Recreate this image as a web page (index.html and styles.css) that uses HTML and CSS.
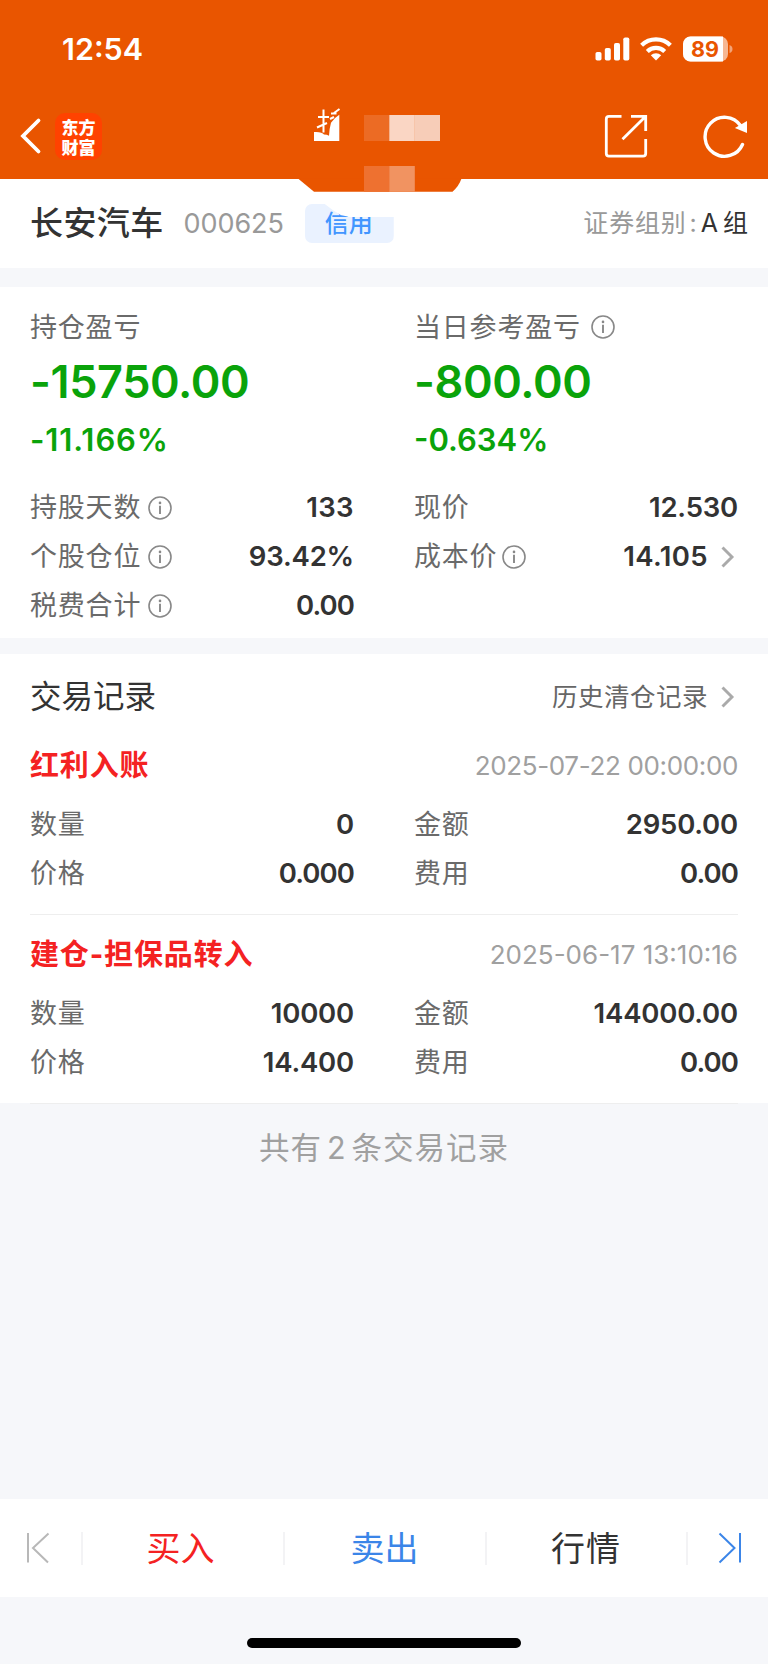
FILE: index.html
```html
<!DOCTYPE html>
<html lang="zh-CN">
<head>
<meta charset="utf-8">
<title>长安汽车 000625</title>
<link rel="stylesheet" href="styles.css">
</head>
<body>
<svg class="defs" width="0" height="0">
  <symbol id="info" viewBox="0 0 24 24"><circle cx="12" cy="12" r="11" fill="none" stroke="currentColor" stroke-width="1.6"/><circle cx="12" cy="6.9" r="1.3" fill="currentColor"/><path d="M12 9.800v8.200" stroke="currentColor" stroke-width="1.9"/></symbol>
  <symbol id="chevron" viewBox="0 0 14 22"><path d="M1.500 1.500 11 11l-9.500 9.500" fill="none" stroke="currentColor" stroke-width="2.900"/></symbol>
</svg>
<div class="screen">
  <header class="header">
    <div class="status">
      <span class="clock">12:54</span>
      <svg class="status-icons" width="140" height="28" viewBox="0 0 140 28">
        <g fill="#fff">
          <rect x="0.500" y="17" width="6" height="8.500" rx="1.800"/>
          <rect x="9.800" y="13" width="6" height="12.500" rx="1.800"/>
          <rect x="19" y="8" width="6" height="17.500" rx="1.800"/>
          <rect x="28.300" y="2.500" width="6" height="23" rx="1.800"/>
          <path d="M61 25.500 55.800 20.300a7.400 7.400 0 0 1 10.400 0Z"/>
        </g>
        <g fill="none" stroke="#fff" stroke-width="4.200">
          <path d="M52.300 16.400a12.500 12.500 0 0 1 17.400 0"/>
          <path d="M46.600 10.300a20.700 20.700 0 0 1 28.800 0"/>
        </g>
        <rect x="88" y="1.500" width="45" height="25" rx="7.500" fill="#f6b793"/>
        <path d="M95.500 1.500H128v25H95.500a7.500 7.500 0 0 1-7.500-7.500V9a7.500 7.500 0 0 1 7.500-7.500Z" fill="#fff"/>
        <path d="M134.500 10q3 1 3 4t-3 4Z" fill="#f3a377"/>
        <text class="battery-level" x="110" y="21.800" text-anchor="middle">89</text>
      </svg>
    </div>
    <div class="nav">
      <svg class="back" width="22" height="38" viewBox="0 0 22 38"><path d="M18.500 3.500 3 19l15.500 15.500" fill="none" stroke="#fff" stroke-width="3.800" stroke-linecap="round"/></svg>
      <div class="brand"><span>东方</span><span>财富</span></div>
      <svg class="share" width="44" height="44" viewBox="0 0 44 44" fill="none" stroke="#fff" stroke-width="2.800">
        <path d="M17.500 2.300H5Q2.300 2.300 2.300 5v34.500q0 2.700 2.700 2.700h34q2.700 0 2.700-2.700V25"/>
        <path d="M27 2.300h14.700V17M41 3 18.500 25.300"/>
      </svg>
      <svg class="refresh" width="46" height="46" viewBox="0 0 46 46"><path d="M40.500 31.500A19.500 19.500 0 1 1 38.500 12.500" fill="none" stroke="#fff" stroke-width="3.400" stroke-linecap="round"/><path d="M45 8v12L32.900 15Z" fill="#fff"/></svg>
    </div>
    <svg class="mask" width="164" height="90" viewBox="298 104 164 90">
      <path d="M298 178.500H461.500Q459 186 452.500 191.700H314Z" fill="#e95500"/>
      <path d="M314 132q8-.5 10 2.500 3 0 5 1.200.3-7 2-13Q334 118 339.300 114.700V141H314Z" fill="#fff"/>
      <path d="M323.500 109.500v23M318 117h11M317 127.500l10-4.500M331 113.500h5.500M334 113l5.500-4M330 119l4-2" fill="none" stroke="#fff" stroke-width="2"/>
      <rect x="364" y="115" width="25.500" height="26" fill="#ec6b24"/>
      <rect x="389.300" y="115" width="25.500" height="26" fill="#fad6c4"/>
      <rect x="414.500" y="115" width="25.500" height="26" fill="#f7cdb8"/>
      <rect x="364" y="166" width="25.500" height="25.700" fill="#ee7130"/>
      <rect x="389.300" y="166" width="25.500" height="25.700" fill="#f19361"/>
    </svg>
  </header>

  <section class="stock">
    <h1 class="name">长安汽车</h1>
    <span class="code">000625</span>
    <span class="tag">信用</span>
    <span class="group"><span class="group-label">证券组别</span><span class="colon">:</span><span class="letter">A</span><span>组</span></span>
  </section>

  <section class="summary">
    <div class="col">
      <div class="label head">持仓盈亏</div>
      <div class="big">-15750.00</div>
      <div class="pct loose">-11.166%</div>
      <div class="row"><span class="label">持股天数</span><svg class="info"><use href="#info"/></svg><b class="num loose">133</b></div>
      <div class="row"><span class="label">个股仓位</span><svg class="info"><use href="#info"/></svg><b class="num">93.42%</b></div>
      <div class="row"><span class="label">税费合计</span><svg class="info"><use href="#info"/></svg><b class="num tight">0.00</b></div>
    </div>
    <div class="col">
      <div class="label head">当日参考盈亏<svg class="info wide"><use href="#info"/></svg></div>
      <div class="big">-800.00</div>
      <div class="pct">-0.634%</div>
      <div class="row"><span class="label">现价</span><b class="num">12.530</b></div>
      <div class="row"><span class="label">成本价</span><svg class="info near"><use href="#info"/></svg><b class="num loose">14.105</b><svg class="chevron"><use href="#chevron"/></svg></div>
    </div>
  </section>

  <section class="records">
    <div class="records-head"><h2 class="records-title">交易记录</h2><span class="history">历史清仓记录</span><svg class="chevron"><use href="#chevron"/></svg></div>
    <article class="record">
      <div class="record-head"><h3 class="kind">红利入账</h3><time class="date tight-date">2025-07-22 00:00:00</time></div>
      <div class="pairs">
        <div class="row"><span class="label">数量</span><b class="num">0</b></div>
        <div class="row"><span class="label">金额</span><b class="num">2950.00</b></div>
        <div class="row"><span class="label">价格</span><b class="num tight">0.000</b></div>
        <div class="row"><span class="label">费用</span><b class="num tight">0.00</b></div>
      </div>
    </article>
    <article class="record">
      <div class="record-head"><h3 class="kind">建仓-担保品转入</h3><time class="date">2025-06-17 13:10:16</time></div>
      <div class="pairs">
        <div class="row"><span class="label">数量</span><b class="num">10000</b></div>
        <div class="row"><span class="label">金额</span><b class="num">144000.00</b></div>
        <div class="row"><span class="label">价格</span><b class="num">14.400</b></div>
        <div class="row"><span class="label">费用</span><b class="num tight">0.00</b></div>
      </div>
    </article>
  </section>

  <p class="total">共有<span class="count">2</span>条交易记录</p>

  <nav class="actions">
    <span class="step to-first"><svg width="24" height="32" viewBox="0 0 24 32"><path d="M2 1v29.500M22.500 1.500 7 16l15 14.500" fill="none" stroke="#b8b8b8" stroke-width="2"/></svg></span>
    <span class="action buy">买入</span>
    <span class="action sell">卖出</span>
    <span class="action quote">行情</span>
    <span class="step to-last"><svg width="24" height="32" viewBox="0 0 24 32"><path d="M22 1v29.500M1.500 1.500 16.500 16l-15 14.500" fill="none" stroke="#3b85e8" stroke-width="2"/></svg></span>
  </nav>
  <footer class="home"><div class="indicator"></div></footer>
</div>
</body>
</html>
```
FILE: styles.css
```css
* { box-sizing: border-box; }
body { margin: 0; }
.defs { display: block; }
.screen {
  width: 768px;
  height: 1664px;
  display: flex;
  flex-direction: column;
  overflow: hidden;
  background: #f6f7fa;
  color: #333;
  font-family: Inter, "Noto Sans CJK SC", sans-serif;
  font-size: 27px;
  line-height: 1;
}
h1, h2, h3, p { margin: 0; font-weight: 400; }
svg { flex: none; display: block; }

.header { position: relative; height: 179px; flex: none; background: #e95500; color: #fff; }
.status { display: flex; justify-content: space-between; align-items: center; height: 98px; padding: 0 33px 0 62px; }
.clock { font-size: 30.500px; font-weight: 600; letter-spacing: 0; }
.battery-level { font-size: 21.500px; font-weight: 700; fill: #e95500; }
.nav { display: flex; align-items: center; height: 76px; padding: 0 20px 0 20px; }
.brand {
  display: flex; flex-direction: column; justify-content: center; gap: 3px;
  width: 47px; height: 47px; margin-left: 13px; border-radius: 10px;
  background: #ff4200; font-family: "Noto Sans CJK SC", sans-serif;
  font-size: 17px; font-weight: 900; line-height: 17px; text-align: center;
}
.share { margin-left: auto; }
.refresh { margin-left: 54px; }
.mask { position: absolute; left: 298px; top: 104px; }

.stock { display: flex; align-items: center; height: 89px; flex: none; padding: 0 20px 0 30px; background: #fff; }
.name { font-size: 33px; font-weight: 500; letter-spacing: .4px; }
.code { margin-left: 20px; color: #999; letter-spacing: -.1px; }
.tag {
  width: 89px; height: 39px; margin-left: 21px; padding-top: 1px; border-radius: 7px;
  background: #eaf2ff; color: #4296ff; font-size: 24px; font-weight: 500; line-height: 38px; text-indent: 20px;
  clip-path: polygon(0 0, 20px 0, 28px 6px, 36px 11px, 45px 13px, 100% 13px, 100% 100%, 0 100%);
}
.group { display: flex; margin-left: auto; font-size: 25px; }
.group-label { color: #999; letter-spacing: .8px; }
.colon { color: #999; margin: 0 4px 0 3px; }
.letter { margin-right: 5px; }

.summary { display: grid; grid-template-columns: 324px 324px; column-gap: 60px; height: 351px; flex: none; margin-top: 19px; padding: 18px 30px 0; background: #fff; }
.label { color: #6a6a6a; letter-spacing: .8px; }
.head { display: flex; align-items: center; height: 44px; }
.big { height: 66px; line-height: 66px; font-size: 45px; font-weight: 600; letter-spacing: -.4px; color: #0aa30a; }
.pct { height: 68px; padding-top: 9px; line-height: 32px; font-size: 31px; font-weight: 600; color: #0aa30a; }
.row { display: flex; align-items: center; height: 49px; }
.num { margin-left: auto; font-weight: 600; font-size: 27.500px; letter-spacing: -.2px; }
.num.tight { letter-spacing: -.9px; }
.num.loose { letter-spacing: .4px; }
.pct.loose { letter-spacing: .9px; }
.info { width: 24px; height: 24px; margin-left: 7px; color: #888; }
.wide { margin-left: 10px; }
.near { margin-left: 5px; }
.chevron { width: 14px; height: 22px; margin-left: 13px; margin-right: 3px; color: #aaa; }

.records { height: 449px; flex: none; margin-top: 16px; padding: 0 30px; background: #fff; }
.records-head { display: flex; align-items: center; height: 85px; }
.records-title { font-size: 31.500px; }
.history { margin-left: auto; font-size: 25.500px; color: #666; letter-spacing: .5px; }
.record { height: 189px; border-bottom: 1px solid #eee; }
.record:first-of-type { height: 176px; }
.record-head { display: flex; align-items: center; justify-content: space-between; height: 74px; padding-top: 5px; }
.record:first-of-type .record-head { height: 61px; padding: 0 0 8px; }
.kind { font-size: 29px; font-weight: 700; color: #f42222; letter-spacing: .85px; }
.date { font-size: 26px; color: #a0a0a0; }
.tight-date { letter-spacing: -.35px; }
.pairs { display: grid; grid-template-columns: 324px 324px; column-gap: 60px; }

.total { margin-top: 21px; height: 48px; line-height: 48px; font-size: 30.500px; letter-spacing: 1px; color: #a0a0a0; text-align: center; }
.count { margin: 0 5px; }

.actions { display: flex; align-items: center; height: 98px; flex: none; margin-top: auto; background: #fff; }
.step { flex: 1; display: flex; justify-content: center; }
.to-first { padding-right: 4px; }
.to-last { padding-left: 4px; }
.action { width: 202px; height: 33px; line-height: 33px; border-left: 2px solid #f3f3f5; text-align: center; font-size: 34px; }
.buy { color: #f42222; padding-right: 4px; }
.sell { color: #3b85e8; }
.quote { border-right: 2px solid #f3f3f5; width: 203px; letter-spacing: 1px; }
.home { height: 67px; flex: none; padding-top: 41px; }
.indicator { width: 274px; height: 10px; margin: 0 auto; border-radius: 5px; background: #000; }
```
